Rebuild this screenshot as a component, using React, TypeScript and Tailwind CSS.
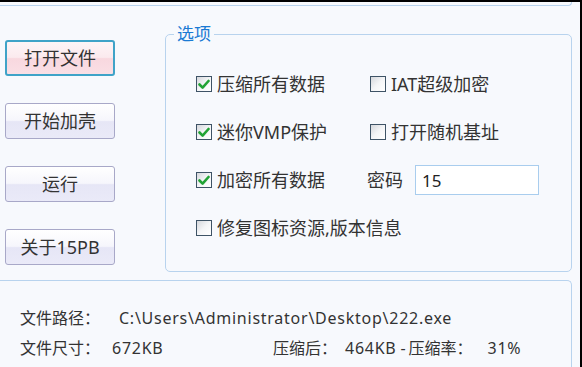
const FONT = { fontFamily: '"Noto Sans", "Noto Sans CJK SC", sans-serif' };

function Check({ checked }: { checked: boolean }) {
	return (
		<span className="w-[16px] h-[16px] shrink-0 border border-[#3e5366] bg-linear-to-br from-[#d6d8dc] via-[#f4f5f7] to-white flex items-center justify-center">
			{checked && (
				<svg width="12" height="11" viewBox="0 0 12 11">
					<path
						d="M1.5 5.5 L4.6 8.6 L10.5 2"
						fill="none"
						stroke="#22a335"
						strokeWidth="2.6"
						strokeLinecap="round"
						strokeLinejoin="round"
					/>
				</svg>
			)}
		</span>
	);
}

function Option({ label, checked }: { label: string; checked: boolean }) {
	return (
		<label className="flex items-center gap-[5px] h-[30px] text-[18px] leading-[30px] text-[#333]">
			<Check checked={checked} />
			<span className="whitespace-nowrap">{label}</span>
		</label>
	);
}

function Btn({ label, focused }: { label: string; focused?: boolean }) {
	return (
		<button
			type="button"
			className={
				focused
					? "w-[110px] h-[36px] rounded-[3px] border-2 border-[#3fa3c8] text-[18px] leading-[20px] text-[#333] bg-[linear-gradient(to_bottom,#fdf5f7_0%,#fbeaee_48%,#f8d8df_52%,#fadfe5_100%)]"
					: "w-[110px] h-[36px] rounded-[3px] border border-[#a8a8c8] text-[18px] leading-[20px] text-[#333] bg-[linear-gradient(to_bottom,#ffffff_0%,#f6f6fc_48%,#e6e6f6_52%,#eaeaf8_100%)]"
			}
		>
			{label}
		</button>
	);
}

export default function App() {
	return (
		<div
			className="w-[582px] h-[367px] overflow-hidden bg-black pt-[2px] pr-[2px]"
			style={FONT}
		>
			<div className="h-full bg-[#f7f9fd] flex flex-col">
				<div className="h-[4px] shrink-0 mr-[8px] border-b border-r border-[#b8d3ee] rounded-br-[5px]" />
				<div className="h-[274px] shrink-0 flex">
					<div className="flex flex-col ml-[5px] pt-[34px] gap-[27px]">
						<Btn label="打开文件" focused />
						<Btn label="开始加壳" />
						<Btn label="运行" />
						<Btn label="关于15PB" />
					</div>
					<fieldset className="ml-[50px] mt-[18px] w-[407px] h-[248px] border border-[#b8d3ee] rounded-[5px]">
						<legend className="ml-[8px] px-[3px] text-[17px] leading-[20px] text-[#1a7ad4]">
							选项
						</legend>
						<div className="grid grid-cols-[174px_1fr] gap-y-[18px] pl-[30px] pt-[25px]">
							<Option label="压缩所有数据" checked />
							<Option label="IAT超级加密" checked={false} />
							<Option label="迷你VMP保护" checked />
							<Option label="打开随机基址" checked={false} />
							<Option label="加密所有数据" checked />
							<div className="flex items-center -ml-[3px] h-[30px]">
								<span className="text-[18px] text-[#333] w-[48px]">密码</span>
								<input
									readOnly
									value="15"
									className="w-[124px] h-[30px] border border-[#a9cdee] bg-white px-[6px] text-[17px] text-[#222] outline-none"
								/>
							</div>
							<div className="col-span-2">
								<Option label="修复图标资源,版本信息" checked={false} />
							</div>
						</div>
					</fieldset>
				</div>
				<div className="flex-1 mr-[8px] border-t border-r border-[#b8d3ee] rounded-tr-[5px] pl-[20px] pt-[22px] text-[16px] leading-[30px] text-[#333]">
					<div className="flex whitespace-nowrap">
						<span className="w-[99px]">文件路径：</span>
						<span className="tracking-[0.75px]">
							C:\Users\Administrator\Desktop\222.exe
						</span>
					</div>
					<div className="flex whitespace-nowrap">
						<span className="w-[92px]">文件尺寸：</span>
						<span className="w-[161px] tracking-[0.75px]">672KB</span>
						<span className="w-[72px]">压缩后：</span>
						<span className="tracking-[0.75px]">464KB</span>
						<span className="ml-[4px] w-[8px]">-</span>
						<span className="w-[79px]">压缩率：</span>
						<span className="tracking-[0.75px]">31%</span>
					</div>
				</div>
			</div>
		</div>
	);
}
